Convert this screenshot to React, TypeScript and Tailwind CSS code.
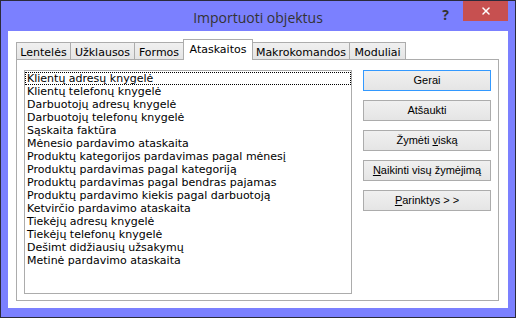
import { X } from "lucide-react";

const tabs = [
  { label: "Lentelės", w: "w-[55px]" },
  { label: "Užklausos", w: "w-[65px]" },
  { label: "Formos", w: "w-[50px]" },
  { label: "Ataskaitos", w: "w-[70px]", active: true },
  { label: "Makrokomandos", w: "w-[98px]" },
  { label: "Moduliai", w: "w-[57px]" },
];

const reports = [
  "Klientų adresų knygelė",
  "Klientų telefonų knygelė",
  "Darbuotojų adresų knygelė",
  "Darbuotojų telefonų knygelė",
  "Sąskaita faktūra",
  "Mėnesio pardavimo ataskaita",
  "Produktų kategorijos pardavimas pagal mėnesį",
  "Produktų pardavimas pagal kategoriją",
  "Produktų pardavimas pagal bendras pajamas",
  "Produktų pardavimo kiekis pagal darbuotoją",
  "Ketvirčio pardavimo ataskaita",
  "Tiekėjų adresų knygelė",
  "Tiekėjų telefonų knygelė",
  "Dešimt didžiausių užsakymų",
  "Metinė pardavimo ataskaita",
];

function DialogButton({ children, primary }: { children: React.ReactNode; primary?: boolean }) {
  return (
    <button
      className={`h-[21px] w-[128px] border bg-gradient-to-b from-[#f0f0f0] to-[#e5e5e5] text-[11px] leading-none text-black font-['Liberation_Sans',Arial,sans-serif] ${
        primary ? "border-[#3399ff]" : "border-[#acacac]"
      }`}
    >
      {children}
    </button>
  );
}

export default function App() {
  return (
    <div className="w-[516px] h-[318px] bg-[#7b80ff] border border-[#2b2b3b] flex flex-col px-[7px] pb-[9px] font-['Tahoma','DejaVu_Sans',sans-serif]">
      {/* Title bar */}
      <div className="h-[30px] grid grid-cols-[1fr_auto_1fr] shrink-0">
        <div />
        <div className="pt-[6px] text-[14px] text-[#333] font-['Segoe_UI','Open_Sans',sans-serif]">
          Importuoti objektus
        </div>
        <div className="flex justify-end items-start">
          <span className="mt-[3px] mr-[14px] text-[14px] font-bold text-[#333] font-['Open_Sans',sans-serif]">?</span>
          <div className="w-[45px] h-[20px] bg-[#c75050] flex items-center justify-center">
            <X className="w-[12px] h-[12px] text-white" strokeWidth={3} />
          </div>
        </div>
      </div>

      {/* Client area */}
      <div className="flex-1 bg-white flex flex-col pt-[8px] pl-[8px] pr-[9px]">
        <div className="h-[20px] flex items-end">
          {tabs.map((t) =>
            t.active ? (
              <div
                key={t.label}
                className={`${t.w} h-[21px] -mb-px -ml-px relative z-10 bg-white border-x border-t border-[#acacac] flex justify-center pt-[2px] text-[11px] text-black`}
              >
                {t.label}
              </div>
            ) : (
              <div
                key={t.label}
                className={`${t.w} h-[17px] -ml-px first:ml-0 border-x border-t border-[#acacac] bg-gradient-to-b from-[#f0f0f0] to-[#e5e5e5] flex justify-center pt-[2px] text-[11px] text-black`}
              >
                {t.label}
              </div>
            )
          )}
        </div>
        <div className="h-[242px] border border-[#acacac] flex pl-[7px] pt-[10px]">
          <div className="w-[328px] h-[224px] border border-[#acacac] pt-px">
            {reports.map((r, i) => (
              <div
                key={r}
                className={`h-[13px] leading-[13px] px-[2px] text-[11px] text-black whitespace-nowrap ${
                  i === 0 ? "outline outline-1 outline-dotted outline-black -outline-offset-1" : ""
                }`}
              >
                {r}
              </div>
            ))}
          </div>
          <div className="ml-[11px] flex flex-col gap-[9px]">
            <DialogButton primary>Gerai</DialogButton>
            <DialogButton>Atšaukti</DialogButton>
            <DialogButton>
              Žymėti <u>v</u>iską
            </DialogButton>
            <DialogButton>
              <u>N</u>aikinti visų žymėjimą
            </DialogButton>
            <DialogButton>
              <u>P</u>arinktys &gt; &gt;
            </DialogButton>
          </div>
        </div>
      </div>
    </div>
  );
}
